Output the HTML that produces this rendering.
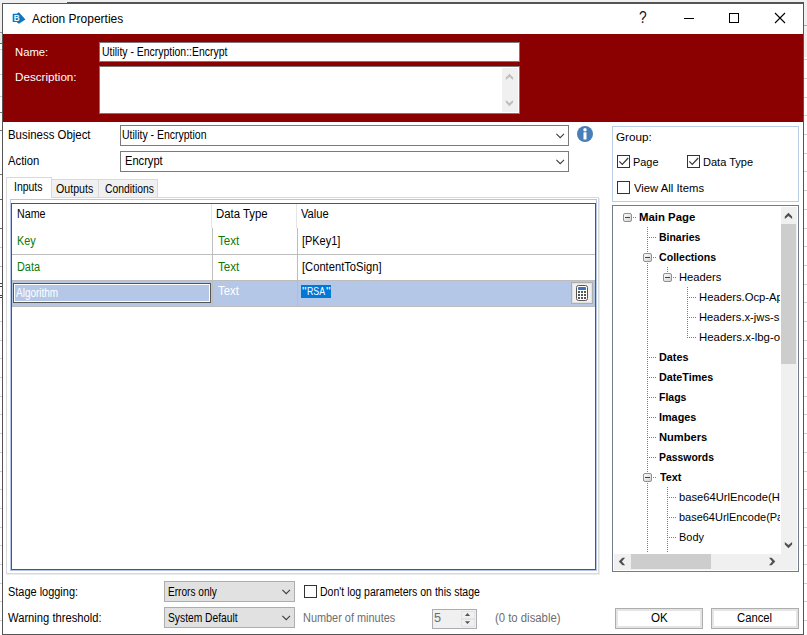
<!DOCTYPE html>
<html><head><meta charset="utf-8"><title>Action Properties</title>
<style>
html,body{margin:0;padding:0}
body{width:807px;height:635px;overflow:hidden;background:#f0f0f0;position:relative;font-family:"Liberation Sans",sans-serif;font-size:11px;color:#000}
.a{position:absolute;box-sizing:border-box}
.t{position:absolute;white-space:nowrap;line-height:16px;height:16px;font-size:12px;transform-origin:0 0}
.s{letter-spacing:0.1px}
#win{left:2px;top:3px;width:802px;height:632px;border:1px solid #555;background:#fff}
#red{left:3px;top:34px;width:800px;height:88px;background:#8b0000}
.inp{border:1px solid #7a7a7a;background:#fff}
.combo{border:1px solid #7a7a7a;background:#fff}
.dd{border:1px solid #adadad;background:#e1e1e1}
.btn{border:1px solid #adadad;background:#fff;box-shadow:inset 0 0 0 2px #e5e5e5;text-align:center}
.cb{width:13px;height:13px;border:1px solid #333;background:#fff}
.ti{position:absolute;white-space:nowrap;line-height:16px;font-size:11px;height:16px}
.b{font-weight:bold}
svg{position:absolute;overflow:visible}
</style></head><body>
<!-- background bits behind the dialog -->
<div class="a" style="left:67px;top:2px;width:737px;height:1px;background:#555"></div>
<div class="a" style="left:0;top:32px;width:2px;height:1px;background:#999"></div>
<div class="a" style="left:804px;top:25px;width:3px;height:1px;background:#aaa"></div>

<div class="a" style="left:804px;top:57px;width:3px;height:578px;background:#fff"></div>
<div class="a" style="left:0;top:33px;width:2px;height:10px;background:#e6e6e6"></div>
<div class="a" style="left:0;top:43px;width:2px;height:1px;background:#666"></div>
<div class="a" style="left:0;top:44px;width:2px;height:591px;background:#fff"></div>
<div class="a" style="left:804px;top:59px;width:3px;height:1px;background:#cfcfcf"></div>
<div class="a" style="left:804px;top:78px;width:3px;height:1px;background:#cfcfcf"></div>
<div class="a" style="left:804px;top:97px;width:3px;height:1px;background:#cfcfcf"></div>
<div class="a" style="left:804px;top:115px;width:3px;height:1px;background:#cfcfcf"></div>
<div class="a" style="left:804px;top:134px;width:3px;height:1px;background:#cfcfcf"></div>
<div class="a" style="left:804px;top:153px;width:3px;height:1px;background:#cfcfcf"></div>
<div class="a" style="left:804px;top:171px;width:3px;height:1px;background:#cfcfcf"></div>
<div class="a" style="left:804px;top:190px;width:3px;height:1px;background:#cfcfcf"></div>
<div class="a" style="left:804px;top:209px;width:3px;height:1px;background:#cfcfcf"></div>
<div class="a" style="left:804px;top:228px;width:3px;height:1px;background:#cfcfcf"></div>
<div class="a" style="left:804px;top:246px;width:3px;height:1px;background:#cfcfcf"></div>
<div class="a" style="left:804px;top:265px;width:3px;height:1px;background:#cfcfcf"></div>
<div class="a" style="left:804px;top:284px;width:3px;height:1px;background:#cfcfcf"></div>
<div class="a" style="left:804px;top:302px;width:3px;height:1px;background:#cfcfcf"></div>
<div class="a" style="left:804px;top:321px;width:3px;height:1px;background:#cfcfcf"></div>
<div class="a" style="left:0;top:321px;width:2px;height:1px;background:#cfcfcf"></div>
<div class="a" style="left:804px;top:340px;width:3px;height:1px;background:#cfcfcf"></div>
<div class="a" style="left:0;top:340px;width:2px;height:1px;background:#cfcfcf"></div>
<div class="a" style="left:804px;top:358px;width:3px;height:1px;background:#cfcfcf"></div>
<div class="a" style="left:0;top:358px;width:2px;height:1px;background:#cfcfcf"></div>
<div class="a" style="left:804px;top:377px;width:3px;height:1px;background:#cfcfcf"></div>
<div class="a" style="left:0;top:377px;width:2px;height:1px;background:#cfcfcf"></div>
<div class="a" style="left:804px;top:396px;width:3px;height:1px;background:#cfcfcf"></div>
<div class="a" style="left:0;top:396px;width:2px;height:1px;background:#cfcfcf"></div>
<div class="a" style="left:804px;top:414px;width:3px;height:1px;background:#cfcfcf"></div>
<div class="a" style="left:0;top:414px;width:2px;height:1px;background:#cfcfcf"></div>
<div class="a" style="left:804px;top:433px;width:3px;height:1px;background:#cfcfcf"></div>
<div class="a" style="left:0;top:433px;width:2px;height:1px;background:#cfcfcf"></div>
<div class="a" style="left:804px;top:452px;width:3px;height:1px;background:#cfcfcf"></div>
<div class="a" style="left:0;top:452px;width:2px;height:1px;background:#cfcfcf"></div>
<div class="a" style="left:804px;top:471px;width:3px;height:1px;background:#cfcfcf"></div>
<div class="a" style="left:0;top:471px;width:2px;height:1px;background:#cfcfcf"></div>
<div class="a" style="left:804px;top:489px;width:3px;height:1px;background:#cfcfcf"></div>
<div class="a" style="left:0;top:489px;width:2px;height:1px;background:#cfcfcf"></div>
<div class="a" style="left:804px;top:508px;width:3px;height:1px;background:#cfcfcf"></div>
<div class="a" style="left:0;top:508px;width:2px;height:1px;background:#cfcfcf"></div>
<div class="a" style="left:804px;top:527px;width:3px;height:1px;background:#cfcfcf"></div>
<div class="a" style="left:0;top:527px;width:2px;height:1px;background:#cfcfcf"></div>
<div class="a" style="left:804px;top:545px;width:3px;height:1px;background:#cfcfcf"></div>
<div class="a" style="left:0;top:545px;width:2px;height:1px;background:#cfcfcf"></div>
<div class="a" style="left:804px;top:564px;width:3px;height:1px;background:#cfcfcf"></div>
<div class="a" style="left:0;top:564px;width:2px;height:1px;background:#cfcfcf"></div>
<div class="a" style="left:804px;top:583px;width:3px;height:1px;background:#cfcfcf"></div>
<div class="a" style="left:0;top:583px;width:2px;height:1px;background:#cfcfcf"></div>
<div class="a" style="left:804px;top:601px;width:3px;height:1px;background:#cfcfcf"></div>
<div class="a" style="left:0;top:601px;width:2px;height:1px;background:#cfcfcf"></div>
<div class="a" style="left:804px;top:620px;width:3px;height:1px;background:#cfcfcf"></div>
<div class="a" style="left:0;top:620px;width:2px;height:1px;background:#cfcfcf"></div>
<div class="a" style="left:0;top:49px;width:2px;height:1px;background:#ccc"></div>
<div class="a" style="left:0;top:74px;width:2px;height:1px;background:#ccc"></div>
<div class="a" style="left:0;top:96px;width:2px;height:1px;background:#ccc"></div>
<div class="a" style="left:0;top:112px;width:2px;height:1px;background:#777"></div>
<div class="a" style="left:0;top:130px;width:2px;height:1px;background:#777"></div>
<div class="a" style="left:0;top:174px;width:2px;height:1px;background:#777"></div>
<div class="a" style="left:0;top:199px;width:2px;height:1px;background:#666"></div>
<div class="a" style="left:0;top:228px;width:2px;height:1px;background:#666"></div>
<div class="a" style="left:0;top:247px;width:2px;height:1px;background:#ccc"></div>
<div class="a" style="left:0;top:266px;width:2px;height:1px;background:#bbb"></div>
<div class="a" style="left:0;top:283px;width:2px;height:1px;background:#444"></div>
<div class="a" style="left:0;top:286px;width:2px;height:1px;background:#444"></div>
<div class="a" style="left:0;top:295px;width:2px;height:1px;background:#444"></div>
<div class="a" style="left:0;top:297px;width:2px;height:1px;background:#444"></div>
<div id="win" class="a"></div>
<!-- title bar -->
<svg style="left:8px;top:8px" width="24" height="20" viewBox="8 8 24 20"><path d="M13.2 13.8 L16.8 13.8 L18.9 12.2 L25.4 19.4 L18.9 23.8 L16.6 22.1 L13.2 22.1 Q12.7 22.1 12.7 21.6 L12.7 14.3 Q12.7 13.8 13.2 13.8 Z" fill="#0f75bc"/><text x="13.7" y="21" font-size="8.2" font-weight="bold" fill="#f4f9fd" font-family="Liberation Sans, sans-serif">B</text></svg>
<div class="a" style="left:684px;top:18px;width:10px;height:1px;background:#000"></div>
<div class="a" style="left:729px;top:13px;width:10px;height:10px;border:1px solid #000"></div>
<svg style="left:775px;top:13px" width="10" height="10" viewBox="0 0 10 10"><path d="M0 0 L10 10 M10 0 L0 10" stroke="#000" stroke-width="1.1" fill="none"/></svg>

<!-- red header -->
<div id="red" class="a"></div>
<div class="a inp" style="left:99px;top:42px;width:421px;height:20px"></div>
<div class="a inp" style="left:99px;top:66px;width:421px;height:48px"></div>
<div class="a" style="left:502px;top:68px;width:16px;height:44px;background:#f0f0f0"></div>
<svg style="left:502px;top:68px" width="17" height="44" viewBox="0 0 17 44"><g fill="#bfbfbf"><polygon points="3.80,9.40 7.45,5.80 11.10,9.40 11.10,12.10 7.45,8.90 3.80,12.10"/><polygon points="3.80,34.60 7.45,38.20 11.10,34.60 11.10,31.90 7.45,35.10 3.80,31.90"/></g></svg>

<!-- business object / action -->
<div class="a combo" style="left:120px;top:125px;width:449px;height:21px"></div>
<div class="a combo" style="left:120px;top:151px;width:449px;height:21px"></div>
<svg style="left:556px;top:133px" width="9" height="6" viewBox="0 0 9 6"><path d="M0.4 0.9 L4.2 4.7 L8 0.9" stroke="#3a3a3a" stroke-width="1.05" fill="none"/></svg>
<svg style="left:556px;top:159px" width="9" height="6" viewBox="0 0 9 6"><path d="M0.4 0.9 L4.2 4.7 L8 0.9" stroke="#3a3a3a" stroke-width="1.05" fill="none"/></svg>
<svg style="left:577px;top:126px" width="16" height="16" viewBox="0 0 16 16"><circle cx="8" cy="8" r="8" fill="#4a7eb8"/><circle cx="8" cy="3.7" r="1.75" fill="#fff"/><rect x="6.5" y="6.3" width="3" height="7.2" fill="#fff"/></svg>

<!-- tabs -->
<div class="a" style="left:6px;top:197px;width:593px;height:377px;border:1px solid #d9d9d9;background:#fff;box-shadow:1px 1px 0 #ececec"></div>
<div class="a" style="left:51px;top:179px;width:48px;height:19px;border:1px solid #d9d9d9;background:#f0f0f0"></div>
<div class="a" style="left:98px;top:179px;width:60px;height:19px;border:1px solid #d9d9d9;background:#f0f0f0"></div>
<div class="a" style="left:6px;top:177px;width:46px;height:21px;border:1px solid #d9d9d9;border-bottom:none;background:#fff"></div>

<!-- grid -->
<div class="a" style="left:10px;top:199px;width:587px;height:372px;border:1px solid #b4c7e7;background:#fff"></div>
<div class="a" style="left:11px;top:203px;width:585px;height:367px;border:1px solid #555;background:#fff"></div>
<!-- header col separators (light) -->
<div class="a" style="left:211px;top:204px;width:1px;height:24px;background:#e5e5e5"></div>
<div class="a" style="left:296px;top:204px;width:1px;height:24px;background:#e5e5e5"></div>
<!-- row separators -->
<div class="a" style="left:212px;top:228px;width:1px;height:79px;background:#bdbdbd"></div>
<div class="a" style="left:297px;top:228px;width:1px;height:79px;background:#bdbdbd"></div>
<div class="a" style="left:12px;top:254px;width:583px;height:1px;background:#bdbdbd"></div>
<div class="a" style="left:12px;top:280px;width:583px;height:1px;background:#bdbdbd"></div>
<div class="a" style="left:12px;top:306px;width:583px;height:1px;background:#bdbdbd"></div>
<!-- selected row -->
<div class="a" style="left:12px;top:281px;width:200px;height:25px;background:#b4c7e7"></div>
<div class="a" style="left:213px;top:281px;width:84px;height:25px;background:#b4c7e7"></div>
<div class="a" style="left:298px;top:281px;width:297px;height:25px;background:#b4c7e7"></div>
<div class="a" style="left:13px;top:283px;width:198px;height:20px;border:1px solid #555;box-shadow:inset 0 0 0 1px #fff;background:#b4c7e7"></div>
<!-- grid text -->
<div class="a" style="left:301px;top:285px;width:30px;height:13px;background:#0078d7"></div>
<!-- calc button -->
<div class="a" style="left:571px;top:282px;width:22px;height:22px;border:1px solid #adadad;background:#f0f0f0;box-shadow:inset 0 0 0 1px #e1e1e1"></div>
<svg style="left:576px;top:285px" width="12" height="16" viewBox="0 0 12 16"><rect x="0.5" y="0.5" width="11" height="15" rx="2" fill="#fff" stroke="#555"/><rect x="2" y="2" width="8" height="3" rx="0.8" fill="#3b73b9"/>
<g fill="#555"><rect x="2" y="6" width="2" height="2"/><rect x="5" y="6" width="2" height="2"/><rect x="8" y="6" width="2" height="2"/><rect x="2" y="9" width="2" height="2"/><rect x="5" y="9" width="2" height="2"/><rect x="8" y="9" width="2" height="2"/><rect x="2" y="12" width="2" height="2"/><rect x="5" y="12" width="2" height="2"/><rect x="8" y="12" width="2" height="2"/></g></svg>

<!-- group box -->
<div class="a" style="left:612px;top:126px;width:187px;height:76px;border:1px solid #b9cde5;background:#fff"></div>
<div class="a cb" style="left:617px;top:155px"></div>
<div class="a cb" style="left:687px;top:155px"></div>
<div class="a cb" style="left:617px;top:181px"></div>
<svg style="left:617px;top:155px" width="13" height="13" viewBox="0 0 13 13"><path d="M2.3 6.4 L5.3 9.4 L11.2 3" stroke="#383838" stroke-width="1.25" fill="none"/></svg>
<svg style="left:687px;top:155px" width="13" height="13" viewBox="0 0 13 13"><path d="M2.3 6.4 L5.3 9.4 L11.2 3" stroke="#383838" stroke-width="1.25" fill="none"/></svg>

<!-- tree -->
<div class="a" style="left:612px;top:205px;width:187px;height:367px;border:1px solid #737b8a;background:#fff"></div>
<div class="a" id="tree" style="left:613px;top:206px;width:167px;height:347px;overflow:hidden">
<svg style="left:0;top:0" width="168" height="348" shape-rendering="crispEdges">
<defs><linearGradient id="bg" x1="0" y1="0" x2="1" y2="1"><stop offset="0" stop-color="#fff"/><stop offset="1" stop-color="#d0d0d0"/></linearGradient></defs>
<g stroke="#808080" stroke-width="1" stroke-dasharray="1 1" fill="none">
<line x1="20" y1="11.5" x2="23" y2="11.5"/>
<line x1="36" y1="31.5" x2="43" y2="31.5"/>
<line x1="40" y1="51.5" x2="43" y2="51.5"/>
<line x1="60" y1="71.5" x2="63" y2="71.5"/>
<line x1="76" y1="91.5" x2="83" y2="91.5"/>
<line x1="76" y1="111.5" x2="83" y2="111.5"/>
<line x1="76" y1="131.5" x2="83" y2="131.5"/>
<line x1="36" y1="151.5" x2="43" y2="151.5"/>
<line x1="36" y1="171.5" x2="43" y2="171.5"/>
<line x1="36" y1="191.5" x2="43" y2="191.5"/>
<line x1="36" y1="211.5" x2="43" y2="211.5"/>
<line x1="36" y1="231.5" x2="43" y2="231.5"/>
<line x1="36" y1="251.5" x2="43" y2="251.5"/>
<line x1="40" y1="271.5" x2="43" y2="271.5"/>
<line x1="56" y1="291.5" x2="63" y2="291.5"/>
<line x1="56" y1="311.5" x2="63" y2="311.5"/>
<line x1="56" y1="331.5" x2="63" y2="331.5"/>
<line x1="34.5" y1="21" x2="34.5" y2="47"/>
<line x1="34.5" y1="57" x2="34.5" y2="267"/>
<line x1="34.5" y1="277" x2="34.5" y2="347"/>
<line x1="54.5" y1="61" x2="54.5" y2="67"/>
<line x1="74.5" y1="81" x2="74.5" y2="132"/>
<line x1="54.5" y1="281" x2="54.5" y2="347"/>
</g>
</svg>
<svg style="left:0;top:0" width="168" height="348">
<g transform="translate(10,7)"><rect x="0.5" y="0.5" width="8" height="8" rx="1.5" fill="url(#bg)" stroke="#919191"/><rect x="2" y="4" width="5" height="1" fill="#2a3f9c"/></g>
<g transform="translate(30,47)"><rect x="0.5" y="0.5" width="8" height="8" rx="1.5" fill="url(#bg)" stroke="#919191"/><rect x="2" y="4" width="5" height="1" fill="#2a3f9c"/></g>
<g transform="translate(50,67)"><rect x="0.5" y="0.5" width="8" height="8" rx="1.5" fill="url(#bg)" stroke="#919191"/><rect x="2" y="4" width="5" height="1" fill="#2a3f9c"/></g>
<g transform="translate(30,267)"><rect x="0.5" y="0.5" width="8" height="8" rx="1.5" fill="url(#bg)" stroke="#919191"/><rect x="2" y="4" width="5" height="1" fill="#2a3f9c"/></g>
</svg>
<div class="t" style="left:26.12px;top:3px;font-size:11px;transform:scaleX(1.0347);font-weight:bold">Main Page</div>
<div class="t" style="left:46.08px;top:23px;font-size:11px;transform:scaleX(0.9517);font-weight:bold">Binaries</div>
<div class="t" style="left:46.36px;top:43px;font-size:11px;transform:scaleX(0.9635);font-weight:bold">Collections</div>
<div class="t" style="left:65.88px;top:63px;font-size:11px;transform:scaleX(1.0191)">Headers</div>
<div class="t" style="left:85.58px;top:83px;font-size:11px;transform:scaleX(1.0235)">Headers.Ocp-Apim-Subscription-Key</div>
<div class="t" style="left:85.58px;top:103px;font-size:11px;transform:scaleX(1.0194)">Headers.x-jws-signature</div>
<div class="t" style="left:85.56px;top:123px;font-size:11px;transform:scaleX(1.0358)">Headers.x-lbg-org</div>
<div class="t" style="left:46.06px;top:143px;font-size:11px;transform:scaleX(0.9819);font-weight:bold">Dates</div>
<div class="t" style="left:46.06px;top:163px;font-size:11px;transform:scaleX(0.9789);font-weight:bold">DateTimes</div>
<div class="t" style="left:46.08px;top:183px;font-size:11px;transform:scaleX(0.9542);font-weight:bold">Flags</div>
<div class="t" style="left:46.06px;top:203px;font-size:11px;transform:scaleX(0.9831);font-weight:bold">Images</div>
<div class="t" style="left:46.04px;top:223px;font-size:11px;transform:scaleX(1.0114);font-weight:bold">Numbers</div>
<div class="t" style="left:46.08px;top:243px;font-size:11px;transform:scaleX(0.9457);font-weight:bold">Passwords</div>
<div class="t" style="left:46.50px;top:263px;font-size:11px;transform:scaleX(0.9823);font-weight:bold">Text</div>
<div class="t" style="left:66.44px;top:283px;font-size:11px;transform:scaleX(1.0170)">base64UrlEncode(Header)</div>
<div class="t" style="left:66.45px;top:303px;font-size:11px;transform:scaleX(0.9965)">base64UrlEncode(Payload)</div>
<div class="t" style="left:66.11px;top:323px;font-size:11px;transform:scaleX(0.9949)">Body</div>
</div>
<!-- tree scrollbars -->
<div class="a" style="left:781px;top:207px;width:16px;height:347px;background:#f0f0f0"></div>
<div class="a" style="left:781px;top:224px;width:15px;height:140px;background:#cdcdcd"></div>
<svg style="left:781px;top:207px" width="16" height="347" viewBox="0 0 16 347"><g fill="#505050"><polygon points="3.80,9.40 7.45,5.80 11.10,9.40 11.10,12.10 7.45,8.90 3.80,12.10"/><polygon points="3.80,337.60 7.45,341.20 11.10,337.60 11.10,334.90 7.45,338.10 3.80,334.90"/></g></svg>
<div class="a" style="left:614px;top:554px;width:183px;height:16px;background:#f0f0f0"></div>
<div class="a" style="left:631px;top:554px;width:80px;height:15px;background:#cdcdcd"></div>
<svg style="left:614px;top:554px" width="183" height="16" viewBox="0 0 183 16"><g fill="#505050"><polygon points="8.40,3.85 4.80,7.50 8.40,11.15 11.10,11.15 7.90,7.50 11.10,3.85"/><polygon points="157.70,3.85 161.30,7.50 157.70,11.15 155.00,11.15 158.20,7.50 155.00,3.85"/></g></svg>

<!-- bottom controls -->
<div class="a dd" style="left:164px;top:581px;width:131px;height:21px"></div>
<div class="a dd" style="left:164px;top:607px;width:131px;height:21px"></div>
<svg style="left:282px;top:589px" width="9" height="6" viewBox="0 0 9 6"><path d="M0.4 0.9 L4.2 4.7 L8 0.9" stroke="#3a3a3a" stroke-width="1.05" fill="none"/></svg>
<svg style="left:282px;top:615px" width="9" height="6" viewBox="0 0 9 6"><path d="M0.4 0.9 L4.2 4.7 L8 0.9" stroke="#3a3a3a" stroke-width="1.05" fill="none"/></svg>
<div class="a cb" style="left:304px;top:585px"></div>
<div class="a" style="left:432px;top:609px;width:45px;height:20px;border:1px solid #abadb3;background:#f0f0f0"></div>
<div class="a" style="left:461px;top:611px;width:14px;height:8px;border:1px solid #e3e3e3;background:#f0f0f0"></div>
<div class="a" style="left:461px;top:619px;width:14px;height:8px;border:1px solid #e3e3e3;background:#f0f0f0"></div>
<svg style="left:461px;top:611px" width="14" height="16" viewBox="0 0 14 16"><path d="M3.9 4.9 L6.5 2.1 L9.1 4.9 Z M3.9 10.2 L6.5 13 L9.1 10.2 Z" fill="#555"/></svg>
<div class="a btn" style="left:615px;top:608px;width:88px;height:21px"></div>
<div class="a btn" style="left:711px;top:608px;width:88px;height:21px"></div>
<div class="t" style="left:639px;top:9px;font-size:16px;line-height:18px;height:18px;transform:scaleX(.86);color:#111">?</div>
<div class="t" style="left:32.18px;top:11px;font-size:12px;transform:scaleX(0.9980)">Action Properties</div>
<div class="t" style="left:14.97px;top:44px;font-size:11px;transform:scaleX(1.0259);color:#fff">Name:</div>
<div class="t" style="left:14.94px;top:69px;font-size:11px;transform:scaleX(1.0607);color:#fff">Description:</div>
<div class="t" style="left:101.63px;top:44px;font-size:12px;transform:scaleX(0.8706)">Utility - Encryption::Encrypt</div>
<div class="t" style="left:7.85px;top:127px;font-size:12px;transform:scaleX(0.9519)">Business Object</div>
<div class="t" style="left:7.79px;top:153px;font-size:12px;transform:scaleX(0.9404)">Action</div>
<div class="t" style="left:122.43px;top:127px;font-size:12px;transform:scaleX(0.8737)">Utility - Encryption</div>
<div class="t" style="left:124.97px;top:153px;font-size:12px;transform:scaleX(0.9264)">Encrypt</div>
<div class="t" style="left:13.91px;top:179px;font-size:12px;transform:scaleX(0.8717)">Inputs</div>
<div class="t" style="left:55.77px;top:181px;font-size:12px;transform:scaleX(0.8872)">Outputs</div>
<div class="t" style="left:104.72px;top:181px;font-size:12px;transform:scaleX(0.8640)">Conditions</div>
<div class="t" style="left:16.61px;top:206px;font-size:12px;transform:scaleX(0.8896)">Name</div>
<div class="t" style="left:215.75px;top:206px;font-size:12px;transform:scaleX(0.9472)">Data Type</div>
<div class="t" style="left:301.39px;top:206px;font-size:12px;transform:scaleX(0.9303)">Value</div>
<div class="t" style="left:16.60px;top:233px;font-size:12px;transform:scaleX(0.9033);color:#0a7a0a">Key</div>
<div class="t" style="left:217.68px;top:233px;font-size:12px;transform:scaleX(0.9691);color:#0a7a0a">Text</div>
<div class="t" style="left:301.69px;top:233px;font-size:12px;transform:scaleX(0.9101)">[PKey1]</div>
<div class="t" style="left:16.59px;top:259px;font-size:12px;transform:scaleX(0.9080);color:#0a7a0a">Data</div>
<div class="t" style="left:217.68px;top:259px;font-size:12px;transform:scaleX(0.9691);color:#0a7a0a">Text</div>
<div class="t" style="left:301.67px;top:259px;font-size:12px;transform:scaleX(0.9313)">[ContentToSign]</div>
<div class="t" style="left:16.20px;top:285px;font-size:12px;transform:scaleX(0.8320);color:#fff">Algorithm</div>
<div class="t" style="left:217.68px;top:283px;font-size:12px;transform:scaleX(0.9462);color:#fff">Text</div>
<div class="t" style="left:301.51px;top:283px;font-size:10.5px;transform:scaleX(1.2417);color:#fff">&quot;</div>
<div class="t" style="left:307.07px;top:283px;font-size:10.5px;transform:scaleX(0.8342);color:#fff">RSA</div>
<div class="t" style="left:325.81px;top:283px;font-size:10.5px;transform:scaleX(1.2417);color:#fff">&quot;</div>
<div class="t" style="left:8.09px;top:584px;font-size:12px;transform:scaleX(0.9126)">Stage logging:</div>
<div class="t" style="left:7.84px;top:610px;font-size:12px;transform:scaleX(0.9329)">Warning threshold:</div>
<div class="t" style="left:168.16px;top:584px;font-size:12px;transform:scaleX(0.8409)">Errors only</div>
<div class="t" style="left:168.14px;top:610px;font-size:12px;transform:scaleX(0.8561)">System Default</div>
<div class="t" style="left:319.82px;top:584px;font-size:12px;transform:scaleX(0.8768)">Don&#x27;t log parameters on this stage</div>
<div class="t" style="left:303.09px;top:610px;font-size:12px;transform:scaleX(0.9094);color:#6d6d6d">Number of minutes</div>
<div class="t" style="left:433.61px;top:610px;font-size:12px;transform:scaleX(1.0586);color:#6d6d6d">5</div>
<div class="t" style="left:494.55px;top:610px;font-size:12px;transform:scaleX(0.9443);color:#6d6d6d">(0 to disable)</div>
<div class="t" style="left:650.83px;top:610px;font-size:12px;transform:scaleX(0.9658)">OK</div>
<div class="t" style="left:736.68px;top:610px;font-size:12px;transform:scaleX(0.9398)">Cancel</div>
<div class="t" style="left:615.78px;top:129px;font-size:11px;transform:scaleX(1.0655)">Group:</div>
<div class="t" style="left:632.81px;top:154px;font-size:11px;transform:scaleX(0.9917)">Page</div>
<div class="t" style="left:702.80px;top:154px;font-size:11px;transform:scaleX(1.0031)">Data Type</div>
<div class="t" style="left:633.64px;top:180px;font-size:11px;transform:scaleX(1.0258)">View All Items</div>
</body></html>
